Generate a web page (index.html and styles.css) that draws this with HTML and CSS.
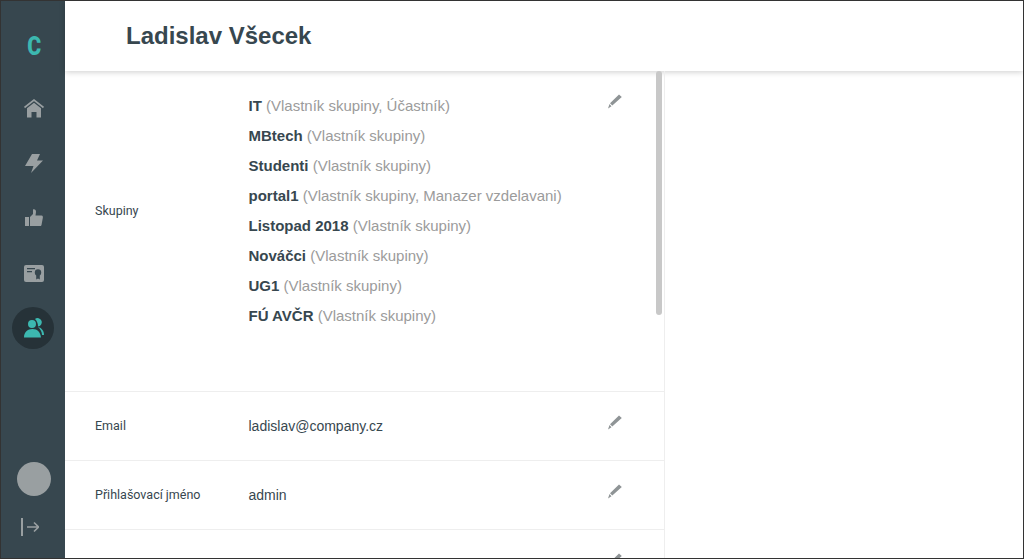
FILE: index.html
```html
<!DOCTYPE html>
<html lang="cs">
<head>
  <meta charset="UTF-8">
  <meta name="viewport" content="width=device-width, initial-scale=1.0">
  <title>Ladislav Všecek</title>
  <link rel="stylesheet" href="styles.css">
</head>
<body>
  <div class="app">
    <nav class="sidebar">
      <div class="logo">C</div>
      <a class="nav_item">
        <svg width="20" height="19" viewBox="0 0 20 19"><path class="ico_roof" d="M.5 8.500 10 1 19.500 8.500"/><path class="ico" d="M10 3.800 17 9.300V18.500H12.500V13H7.500V18.500H3V9.300Z"/></svg>
      </a>
      <a class="nav_item">
        <svg width="18" height="19" viewBox="0 0 18 19"><path class="ico" d="M7 0H15L12 6.500H18L6 19 8.500 12H0Z"/></svg>
      </a>
      <a class="nav_item">
        <svg width="18" height="18" viewBox="0 0 18 18"><path class="ico" d="M0 8H4V17H0ZM5 8 8 5V.5C10 0 11 1 11 3L10.500 6.500H16.500C18 6.500 18 8 17.800 9L16.500 16C16.300 17 15.500 17 15 17H5Z"/></svg>
      </a>
      <a class="nav_item">
        <svg width="20" height="17" viewBox="0 0 20 17">
          <rect class="ico" width="20" height="17" rx="2"/>
          <path class="ico_cut" d="M3 3H11V4.200H3ZM3 6H8V7.200H3ZM12.200 10H15.800V14.500L14 13.500 12.200 14.500Z"/>
          <circle class="ico_cut" cx="14" cy="7.500" r="3.200"/>
        </svg>
      </a>
      <a class="nav_item active">
        <svg width="20" height="20" viewBox="0 0 20 20"><path class="ico_on" d="M8 2A4 4 0 1 1 7.999 10 4 4 0 1 1 8 2ZM0 19.500C0 14.200 3.500 11 8.500 11 13.500 11 16.500 14.200 17 19.500ZM11 1A4.200 4.200 0 1 1 14 8.500C14 5.500 13 3 11 1ZM14 9C18 10 20 13 20 17H18C18 14 16.500 11 14 9Z"/></svg>
      </a>
      <div class="side_bottom">
        <div class="avatar"></div>
        <svg class="logout" width="18" height="18" viewBox="0 0 18 18"><path class="ico_bar" d="M1 0V18"/><path class="ico_arrow" d="M6 9H17.500M13 4.500 17.500 9 13 13.500"/></svg>
      </div>
    </nav>
    <main class="main">
      <header class="top">
        <h1>Ladislav Všecek</h1>
      </header>
      <div class="content">
        <section class="panel">
          <div class="row row_groups">
            <div class="label">Skupiny</div>
            <ul class="groups">
              <li><b>IT</b> (Vlastník skupiny, Účastník)</li>
              <li><b>MBtech</b> (Vlastník skupiny)</li>
              <li><b>Studenti</b> (Vlastník skupiny)</li>
              <li><b>portal1</b> (Vlastník skupiny, Manazer vzdelavani)</li>
              <li><b>Listopad 2018</b> (Vlastník skupiny)</li>
              <li><b>Nováčci</b> (Vlastník skupiny)</li>
              <li><b>UG1</b> (Vlastník skupiny)</li>
              <li><b>FÚ AVČR</b> (Vlastník skupiny)</li>
            </ul>
            <svg class="edit" width="14" height="15" viewBox="0 0 14 15"><path d="M11 .5 13.800 3 4.300 11.500 2 9.200ZM1.500 10 3.500 12.200 0 14.500Z"/></svg>
          </div>
          <div class="row">
            <div class="label">Email</div>
            <div class="value">ladislav@company.cz</div>
            <svg class="edit" width="14" height="15" viewBox="0 0 14 15"><path d="M11 .5 13.800 3 4.300 11.500 2 9.200ZM1.500 10 3.500 12.200 0 14.500Z"/></svg>
          </div>
          <div class="row">
            <div class="label">Přihlašovací jméno</div>
            <div class="value">admin</div>
            <svg class="edit" width="14" height="15" viewBox="0 0 14 15"><path d="M11 .5 13.800 3 4.300 11.500 2 9.200ZM1.500 10 3.500 12.200 0 14.500Z"/></svg>
          </div>
          <div class="row">
            <div class="label">Heslo</div>
            <div class="value"></div>
            <svg class="edit" width="14" height="15" viewBox="0 0 14 15"><path d="M11 .5 13.800 3 4.300 11.500 2 9.200ZM1.500 10 3.500 12.200 0 14.500Z"/></svg>
          </div>
          <div class="scroll_thumb"></div>
        </section>
        <section class="side_panel"></section>
      </div>
    </main>
  </div>
</body>
</html>
```

FILE: styles.css
```css
* {
  box-sizing: border-box;
}
html, body {
  height: 100%;
  margin: 0;
  overflow: hidden;
}
body {
  font-family: "Liberation Sans", Arial, sans-serif;
  color: #37474f;
  background-color: #fff;
}
.app {
  display: flex;
  height: 559px;
  border: 1px solid #333;
  overflow: hidden;
}
.sidebar {
  width: 64px;
  flex: none;
  background-color: #37474f;
  display: flex;
  flex-direction: column;
  align-items: center;
  padding-top: 29px;
}
.logo {
  font-family: Roboto, sans-serif;
  font-weight: 900;
  font-size: 25px;
  line-height: 34px;
  color: #3cb8b0;
  margin-bottom: 23px;
  transform: translateX(1px) scaleX(.85);
}
.nav_item {
  width: 42px;
  height: 42px;
  margin-bottom: 13px;
  border-radius: 50%;
  display: flex;
  align-items: center;
  justify-content: center;
}
.nav_item svg {
  margin-left: 2px;
}
.nav_item.active {
  background-color: #263238;
}
.ico {
  fill: #999fa1;
}
.ico_roof {
  fill: none;
  stroke: #999fa1;
  stroke-width: 1.6;
}
.ico_cut {
  fill: #37474f;
}
.ico_on {
  fill: #3cb8b0;
}
.ico_bar {
  fill: none;
  stroke: #999fa1;
  stroke-width: 2;
}
.ico_arrow {
  fill: none;
  stroke: #999fa1;
  stroke-width: 1.6;
}
.side_bottom {
  margin-top: auto;
  padding-left: 2px;
  padding-bottom: 22px;
  display: flex;
  flex-direction: column;
  align-items: center;
}
.avatar {
  width: 34px;
  height: 34px;
  border-radius: 50%;
  background-color: #999fa1;
  margin-bottom: 22px;
}
.logout {
  display: block;
  margin-right: 8px;
}
.main {
  flex: 1;
  min-width: 0;
  display: flex;
  flex-direction: column;
}
.top {
  height: 70px;
  flex: none;
  padding-left: 61px;
  display: flex;
  align-items: center;
  background-color: #fff;
  box-shadow: 0 1px 6px rgba(0, 0, 0, .2);
  position: relative;
}
.top h1 {
  margin: 0;
  font-size: 24px;
  font-weight: 700;
}
.content {
  flex: 1;
  min-height: 0;
  display: flex;
}
.panel {
  width: 600px;
  flex: none;
  border-right: 1px solid #eee;
  position: relative;
  overflow: hidden;
}
.side_panel {
  flex: 1;
}
.row {
  display: flex;
  align-items: center;
  height: 69px;
  padding-left: 30px;
  border-bottom: 1px solid #eee;
  position: relative;
}
.row_groups {
  height: 321px;
  padding-bottom: 40px;
}
.label {
  width: 153.5px;
  flex: none;
  margin-bottom: 2px;
  font-family: Roboto, sans-serif;
  font-size: 12.5px;
}
.value {
  font-size: 14px;
}
.groups {
  list-style: none;
  margin: 0;
  padding: 20px 0 0;
  align-self: flex-start;
  font-size: 15px;
  line-height: 30px;
  color: #9b9b9b;
}
.groups b {
  color: #37474f;
}
.edit {
  position: absolute;
  right: 42px;
  top: 23px;
  fill: #8f9496;
}
.scroll_thumb {
  position: absolute;
  right: 2px;
  top: 0;
  width: 6px;
  height: 244px;
  border-radius: 3px;
  background-color: #c8c8c8;
}
```
